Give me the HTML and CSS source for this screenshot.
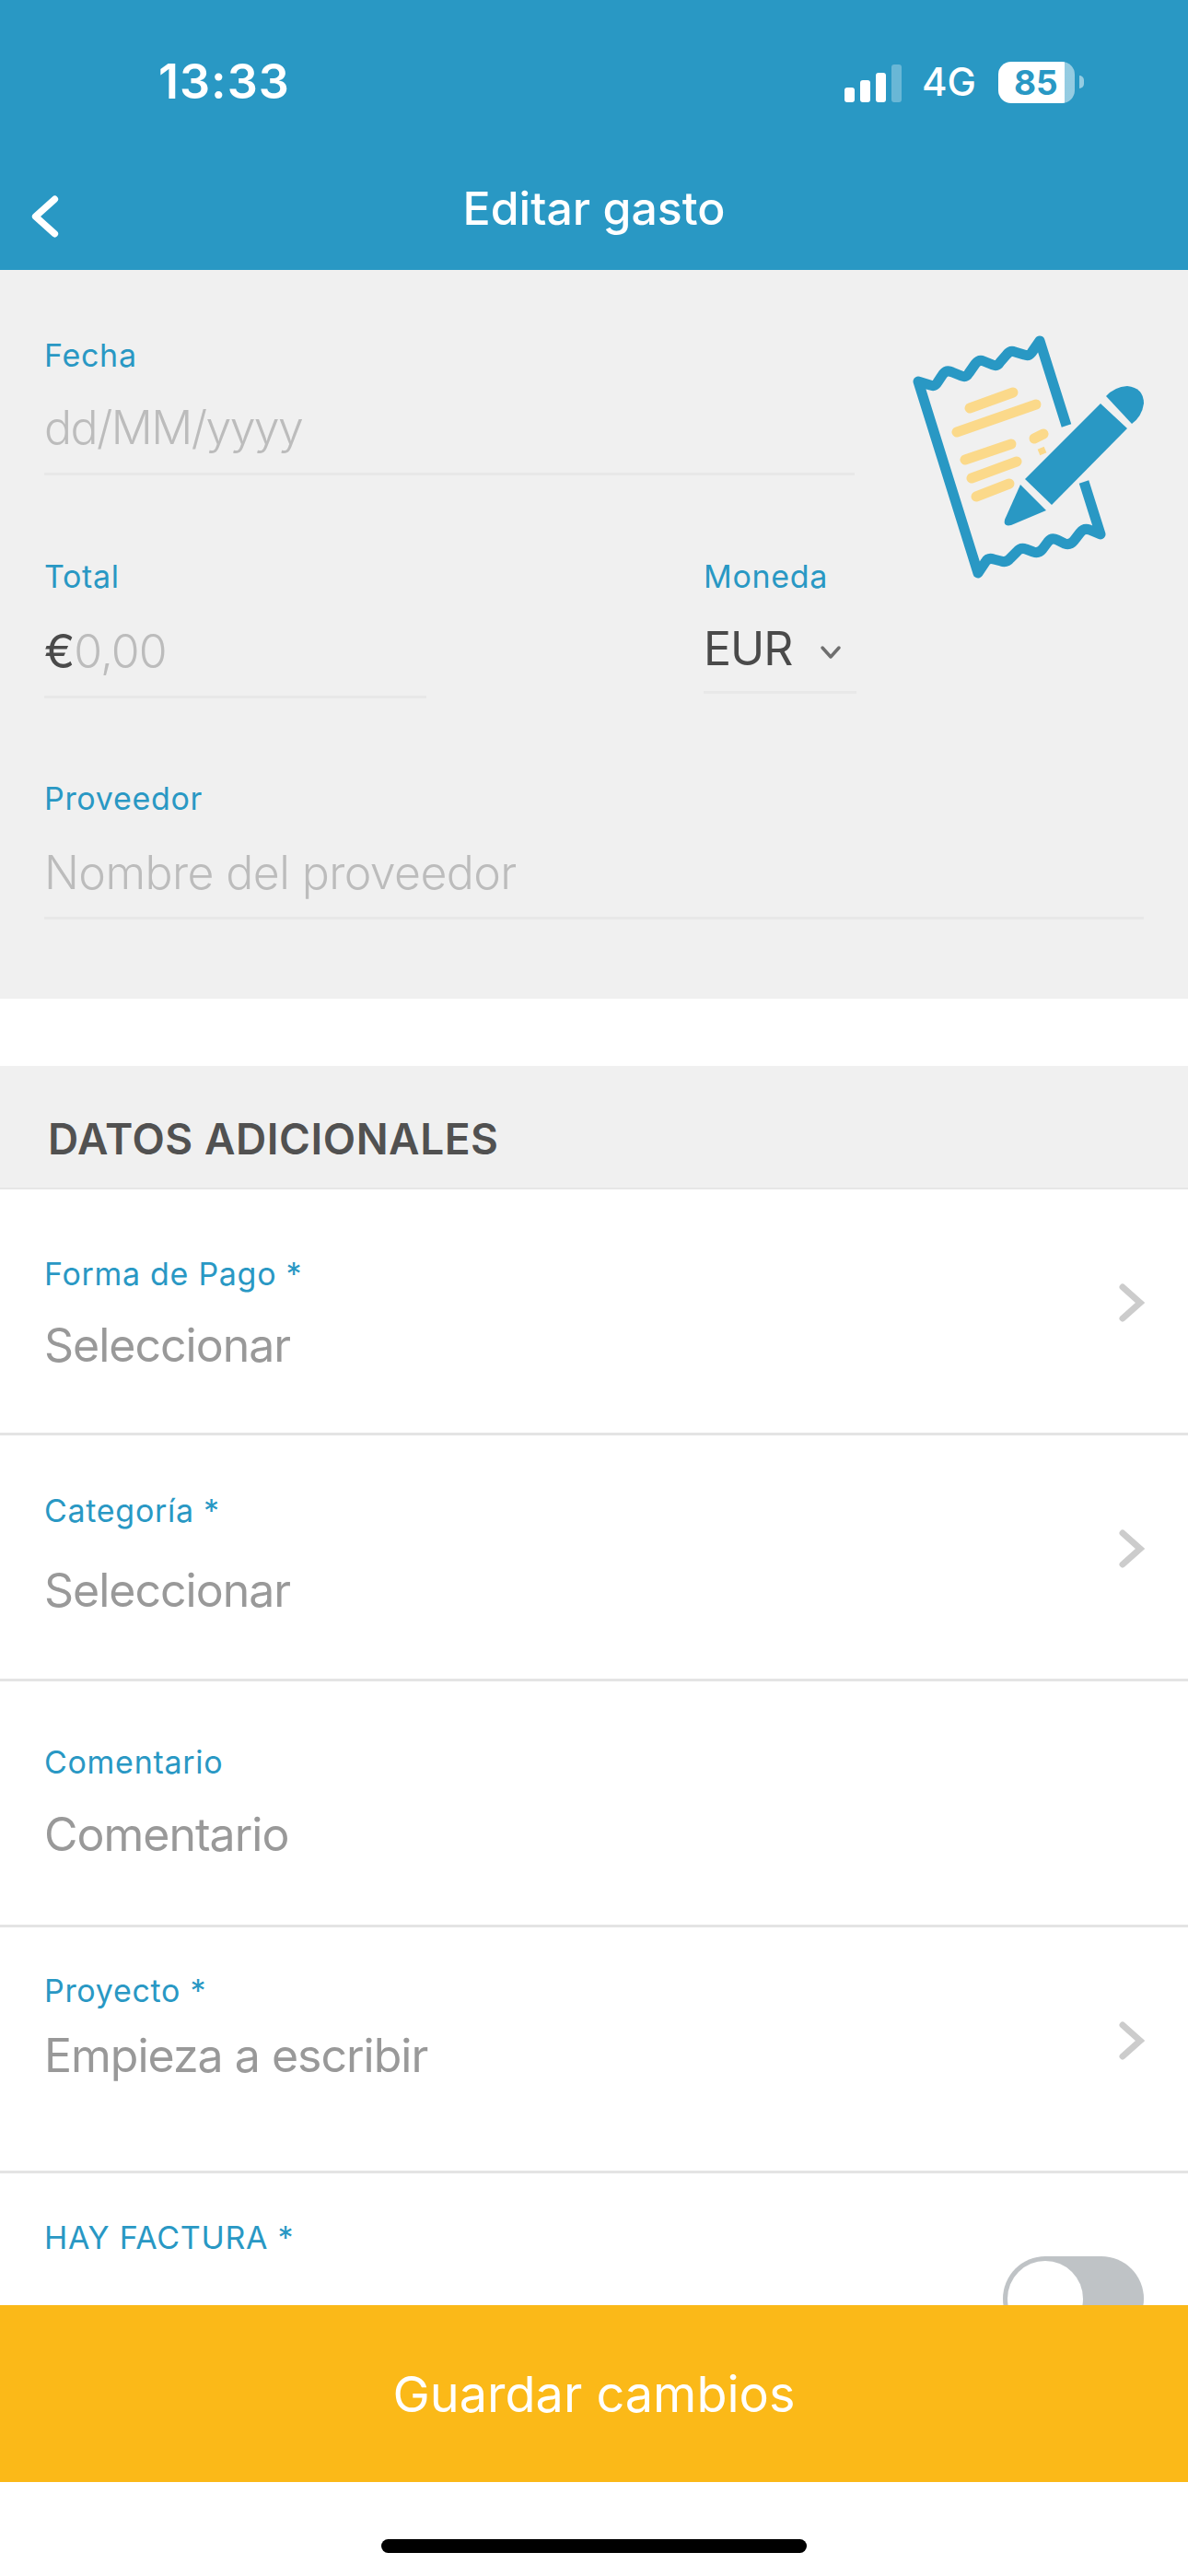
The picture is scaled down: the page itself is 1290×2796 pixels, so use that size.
FILE: index.html
```html
<!DOCTYPE html>
<html lang="es">

<head>
    <meta charset="UTF-8" />
    <meta name="viewport" content="width=device-width, initial-scale=1.0" />
    <title>Editar gasto</title>
    <link rel="stylesheet" href="styles.css">
</head>

<body>
    <header class="topbar">
        <div class="status">
            <span class="time">13:33</span>
            <div class="status-right">
                <div class="signal">
                    <i class="bar bar1"></i>
                    <i class="bar bar2"></i>
                    <i class="bar bar3"></i>
                    <i class="bar bar4"></i>
                </div>
                <span class="network">4G</span>
                <div class="battery"><span>85</span></div>
                <i class="battery-nub"></i>
            </div>
        </div>
        <div class="nav">
            <svg class="back" viewBox="0 0 30 44" fill="none" stroke="#fff" stroke-width="7" stroke-linecap="round" stroke-linejoin="round">
                <path d="M25 4 L5 22 L25 40" />
            </svg>
            <h1>Editar gasto</h1>
        </div>
    </header>

    <main class="content">
        <section class="main-form">
            <svg class="receipt" viewBox="0 0 300 320" fill="none">
                <g stroke="#fbd98a" stroke-width="11" stroke-linecap="round">
                    <path d="M93 103 L140 86" />
                    <path d="M79 129 L165 99" />
                    <path d="M163 136 L173 131" />
                    <path d="M88 159 L138 142" />
                    <path d="M95 179 L144 161" />
                    <path d="M100 199 L136 185" />
                </g>
                <path d="M168 151 L175 148" stroke="#fbd98a" stroke-width="7" />
                <path d="M198 122 L169 30 L160 43 Q157 47 152 45 L142 42 Q137 40 133 45 L126 53 Q123 58 118 56 L108 52 Q103 50 99 55 L92 65 Q89 70 84 68 L74 64 Q68 61 64 66 L58 75 Q55 80 50 78 L37 74 L102 282 L110 270 Q113 265 119 267 L127 269 Q133 271 137 266 L144 259 Q148 254 154 256 L162 259 Q168 261 172 256 L178 248 Q182 243 188 246 L196 250 Q202 252 206 247 L213 238 Q217 233 223 235 L235 240 L217 183" stroke="#2998c4" stroke-width="11" stroke-linejoin="round" />
                <g fill="#2998c4">
                    <path d="M235 98 L264 125 L182 208 L153 180 Z" />
                    <path d="M241 90 Q250 80 264 79 Q282 81 282 98 Q280 112 269 120 Z" />
                    <path d="M148 186 L176 214 L138 230 Q129 232 131 224 Z" />
                </g>
            </svg>

            <div class="field field-date">
                <label class="label">Fecha</label>
                <div class="value muted">dd/MM/yyyy</div>
            </div>

            <div class="field-row">
                <div class="field field-total">
                    <label class="label">Total</label>
                    <div class="value"><span class="euro">€</span><span class="muted">0,00</span></div>
                </div>
                <div class="field field-currency">
                    <label class="label">Moneda</label>
                    <div class="value currency">
                        <span>EUR</span>
                        <svg class="caret" viewBox="0 0 24 16" fill="none" stroke="#6f6f6f" stroke-width="3.5" stroke-linecap="round" stroke-linejoin="round">
                            <path d="M3 3 L12 13 L21 3" />
                        </svg>
                    </div>
                </div>
            </div>

            <div class="field field-provider">
                <label class="label">Proveedor</label>
                <div class="value muted">Nombre del proveedor</div>
            </div>
        </section>

        <h2 class="section-title">DATOS ADICIONALES</h2>

        <div class="row row-payment">
            <div class="row-text">
                <label class="label">Forma de Pago *</label>
                <div class="value placeholder">Seleccionar</div>
            </div>
            <svg class="chevron" viewBox="0 0 28 42" fill="none" stroke="#cccccc" stroke-width="7" stroke-linecap="round">
                <path d="M4 4 L23 21 L4 38" />
            </svg>
        </div>

        <div class="row row-category">
            <div class="row-text">
                <label class="label">Categoría *</label>
                <div class="value placeholder">Seleccionar</div>
            </div>
            <svg class="chevron" viewBox="0 0 28 42" fill="none" stroke="#cccccc" stroke-width="7" stroke-linecap="round">
                <path d="M4 4 L23 21 L4 38" />
            </svg>
        </div>

        <div class="row row-comment">
            <div class="row-text">
                <label class="label">Comentario</label>
                <div class="value placeholder">Comentario</div>
            </div>
        </div>

        <div class="row row-project">
            <div class="row-text">
                <label class="label">Proyecto *</label>
                <div class="value placeholder">Empieza a escribir</div>
            </div>
            <svg class="chevron" viewBox="0 0 28 42" fill="none" stroke="#cccccc" stroke-width="7" stroke-linecap="round">
                <path d="M4 4 L23 21 L4 38" />
            </svg>
        </div>

        <div class="row row-invoice">
            <div class="row-text">
                <label class="label">HAY FACTURA *</label>
            </div>
            <div class="toggle"><i class="thumb"></i></div>
        </div>
    </main>

    <button class="save" type="button">Guardar cambios</button>

    <div class="home-area"><i class="home-bar"></i></div>
</body>

</html>
```

FILE: styles.css
```css
* {
    padding: 0;
    margin: 0;
    box-sizing: border-box;
}

body {
    width: 1290px;
    height: 2796px;
    display: flex;
    flex-direction: column;
    overflow: hidden;
    background-color: white;
    font-family: Inter, "Liberation Sans", sans-serif;
}

.topbar {
    height: 293px;
    flex-shrink: 0;
    background-color: #2998c4;
    color: white;
}

.status {
    height: 174px;
    display: flex;
    justify-content: space-between;
    padding: 62px 113px 0 172px;
}

.time {
    font-size: 52px;
    font-weight: 600;
    line-height: 54px;
    letter-spacing: 1px;
}

.status-right {
    height: 54px;
    display: flex;
    align-items: center;
}

.signal {
    display: flex;
    align-items: flex-end;
    gap: 6px;
    height: 41px;
    margin-top: 3px;
}

.bar {
    width: 11px;
    border-radius: 3px;
    background-color: white;
}

.bar1 {
    height: 16px;
}

.bar2 {
    height: 24px;
}

.bar3 {
    height: 32px;
}

.bar4 {
    height: 41px;
    opacity: 0.3;
}

.network {
    margin-left: 22px;
    font-size: 42px;
    font-weight: 500;
    line-height: 44px;
}

.battery {
    width: 83px;
    height: 45px;
    margin-left: 24px;
    display: flex;
    align-items: center;
    padding-left: 17px;
    border-radius: 14px;
    background: linear-gradient(to right, white 72px, rgba(255, 255, 255, 0.5) 72px);
    color: #2998c4;
    font-size: 37px;
    font-weight: 700;
}

.battery-nub {
    width: 5px;
    height: 14px;
    margin-left: 5px;
    border-radius: 0 5px 5px 0;
    background-color: rgba(255, 255, 255, 0.5);
}

.nav {
    position: relative;
    display: flex;
    justify-content: center;
}

.nav h1 {
    font-size: 50px;
    font-weight: 500;
    line-height: 60px;
    margin-top: 22px;
}

.back {
    position: absolute;
    left: 33px;
    top: 38px;
    width: 32px;
    height: 46px;
}

.content {
    flex: 1;
    min-height: 0;
    overflow: hidden;
}

.main-form {
    position: relative;
    height: 791px;
    padding: 73px 48px 0;
    background-color: #f0f0f0;
}

.receipt {
    position: absolute;
    left: 960px;
    top: 47px;
    width: 300px;
    height: 320px;
}

.label {
    display: block;
    font-size: 34px;
    line-height: 40px;
    letter-spacing: 0.7px;
    color: #2998c4;
}

.value {
    font-size: 50px;
    line-height: 60px;
    letter-spacing: -1px;
}

.muted {
    color: #bcbcbc;
    font-weight: 300;
}

.field .value {
    margin-top: 28px;
    border-bottom: 3px solid #e8e8e8;
}

.field-date {
    width: 880px;
}

.field-date .value {
    padding-bottom: 19px;
    letter-spacing: -1.6px;
}

.field-row {
    display: flex;
    margin-top: 90px;
}

.field-total {
    width: 415px;
}

.field-total .value {
    margin-top: 31px;
    padding-bottom: 18px;
}

.euro {
    color: #4a4a4a;
}

.field-currency {
    width: 166px;
    margin-left: 301px;
}

.currency {
    display: flex;
    align-items: center;
    padding-bottom: 16px;
    color: #4a4a4a;
}

.caret {
    width: 24px;
    height: 16px;
    margin: 8px 0 0 30px;
}

.field-provider {
    margin-top: 89px;
}

.field-provider .value {
    margin-top: 30px;
    padding-bottom: 18px;
    letter-spacing: -0.6px;
}

.section-title {
    height: 134px;
    margin-top: 73px;
    padding: 51px 0 0 52px;
    background-color: #f0f0f0;
    border-bottom: 2px solid #e6e6e6;
    font-size: 46px;
    font-weight: 600;
    line-height: 56px;
    letter-spacing: 0.55px;
    color: #515151;
}

.row {
    height: 267px;
    display: flex;
    justify-content: space-between;
    padding: 0 48px;
    border-bottom: 3px solid #e4e4e4;
}

.placeholder {
    color: #999999;
}

.row-payment .row-text {
    padding-top: 72px;
}

.row-payment .value {
    margin-top: 27px;
}

.row-category .row-text {
    padding-top: 62px;
}

.row-category .value {
    margin-top: 36px;
}

.row-comment .row-text {
    padding-top: 68px;
}

.row-comment .value {
    margin-top: 28px;
}

.row-project .row-text {
    padding-top: 49px;
}

.row-project .value {
    margin-top: 20px;
}

.row-invoice {
    border-bottom: none;
    overflow: hidden;
}

.row-invoice .row-text {
    padding-top: 50px;
}

.chevron {
    width: 28px;
    height: 42px;
    margin: 102px -1px 0 0;
}

.toggle {
    width: 153px;
    height: 92px;
    flex-shrink: 0;
    margin-top: 90px;
    padding: 5px;
    border-radius: 46px;
    background-color: #bfc3c6;
}

.thumb {
    display: block;
    width: 82px;
    height: 82px;
    border-radius: 50%;
    background-color: white;
}

.save {
    height: 192px;
    flex-shrink: 0;
    border: none;
    background-color: #fbb918;
    color: white;
    font-family: Inter, "Liberation Sans", sans-serif;
    font-size: 54px;
    font-weight: 400;
}

.home-area {
    height: 102px;
    flex-shrink: 0;
    display: flex;
    justify-content: center;
    padding-top: 62px;
}

.home-bar {
    width: 462px;
    height: 15px;
    border-radius: 8px;
    background-color: black;
}
```
